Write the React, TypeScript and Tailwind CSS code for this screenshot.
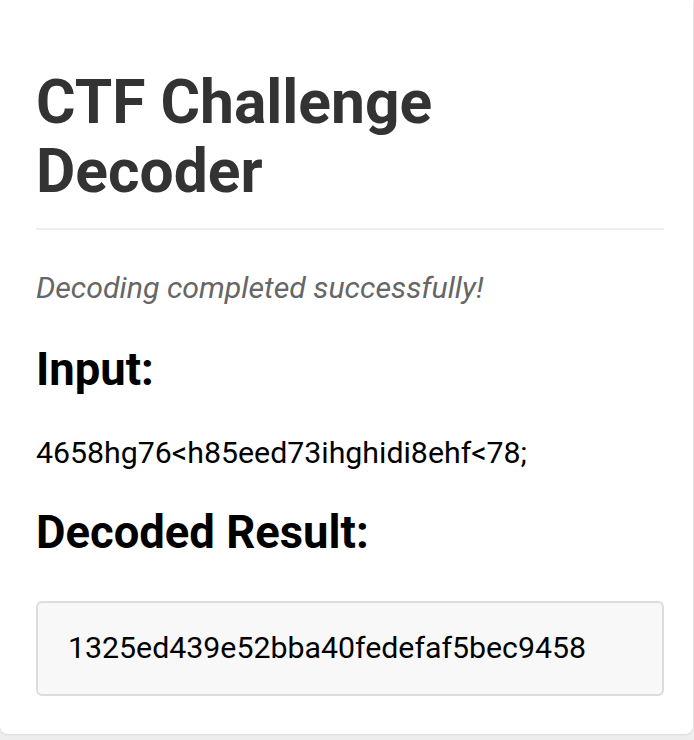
import React from "react";

const result = {
  status: "Decoding completed successfully!",
  input: "4658hg76<h85eed73ihghidi8ehf<78;",
  decoded: "1325ed439e52bba40fedefaf5bec9458",
};

export default function App() {
  return (
    <div className="min-h-[740px] bg-[#eeeeee] pb-[6px] font-['Roboto',sans-serif]">
      <div className="mr-px rounded-b-lg bg-white pb-[38px] pl-9 pr-[29px] pt-[68px] shadow-[0_1px_3px_rgba(0,0,0,0.08)]">
        {/* Header */}
        <div className="border-b-2 border-[#eeeeee] pb-[22px]">
          <h1 className="text-[60.5px] font-bold leading-[69px] text-[#333333]">
            CTF Challenge
            <br />
            Decoder
          </h1>
        </div>

        <p className="mt-[40px] text-[30.3px] italic leading-[36px] text-[#666666]">
          {result.status}
        </p>

        <h2 className="mt-[37px] text-[45.4px] font-bold leading-[54px] text-black">
          Input:
        </h2>
        <p className="mt-[38px] text-[30.3px] leading-[36px] text-black">
          {result.input}
        </p>

        <h2 className="mt-[35px] text-[45.4px] font-bold leading-[54px] text-black">
          Decoded Result:
        </h2>
        <div className="mt-[41px] rounded-md border-2 border-[#dddddd] bg-[#f8f8f8] px-[30px] pb-[28px] pt-[27px] text-[30.3px] leading-[36px] text-black">
          {result.decoded}
        </div>
      </div>
    </div>
  );
}
